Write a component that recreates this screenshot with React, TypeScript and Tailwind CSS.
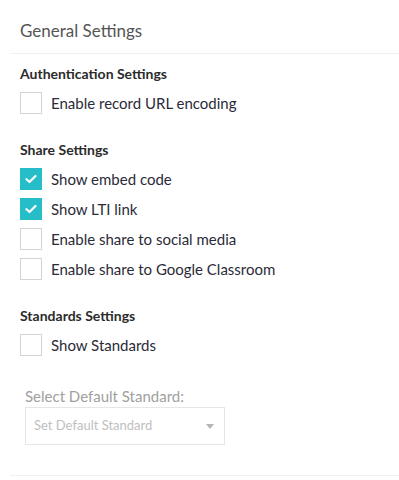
import React from "react";

function Check({ checked }: { checked?: boolean }) {
  return checked ? (
    <span className="flex h-[22px] w-[22px] items-center justify-center bg-[#25bdc7]">
      <svg width="12" height="10" viewBox="0 0 12 10" fill="none">
        <path d="M1.5 5.2 L4.5 8 L10.5 2" stroke="white" strokeWidth="2.2" strokeLinecap="round" strokeLinejoin="round" />
      </svg>
    </span>
  ) : (
    <span className="block h-[22px] w-[22px] border border-[#d8d2ce] bg-white" />
  );
}

function Row({ label, checked }: { label: string; checked?: boolean }) {
  return (
    <div className="flex h-[30px] items-center">
      <Check checked={checked} />
      <span className="ml-[9px] text-[15px] text-[#2b2b38]">{label}</span>
    </div>
  );
}

function Heading({ children, className = "" }: { children: React.ReactNode; className?: string }) {
  return <div className={"h-[20px] leading-[20px] text-[14px] font-bold text-[#2b2b2b] " + className}>{children}</div>;
}

export default function App() {
  return (
    <div className="w-[399px] h-[480px] bg-white" style={{ fontFamily: "Lato, 'Noto Sans', sans-serif" }}>
      <div className="ml-[10px] flex h-[54px] items-center border-b border-[#f0f0f0] pl-[10px] pt-[8px] text-[17px] text-[#555]">
        General Settings
      </div>
      <div className="pl-5">
        <Heading className="mt-[10px]">Authentication Settings</Heading>
        <div className="mt-[4px]">
          <Row label="Enable record URL encoding" />
        </div>
        <Heading className="mt-[22px]">Share Settings</Heading>
        <div className="mt-[4px]">
          <Row label="Show embed code" checked />
          <Row label="Show LTI link" checked />
          <Row label="Enable share to social media" />
          <Row label="Enable share to Google Classroom" />
        </div>
        <Heading className="mt-[22px]">Standards Settings</Heading>
        <div className="mt-[4px]">
          <Row label="Show Standards" />
        </div>
        <div className="ml-[5px] mt-[25px]">
          <div className="h-[22px] leading-[22px] text-[15px] text-[#a0a0a0]">Select Default Standard:</div>
          <div className="flex h-[38px] w-[200px] items-center justify-between border border-[#e6e6e6] pl-[8px] pr-[10px]">
            <span className="text-[13px] text-[#c0c0c0]">Set Default Standard</span>
            <svg width="8" height="5" viewBox="0 0 8 5">
              <path d="M0 0 H8 L4 5 Z" fill="#b5b5b5" />
            </svg>
          </div>
        </div>
      </div>
      <div className="ml-[10px] mt-[30px] border-b border-[#f0f0f0]" />
    </div>
  );
}
